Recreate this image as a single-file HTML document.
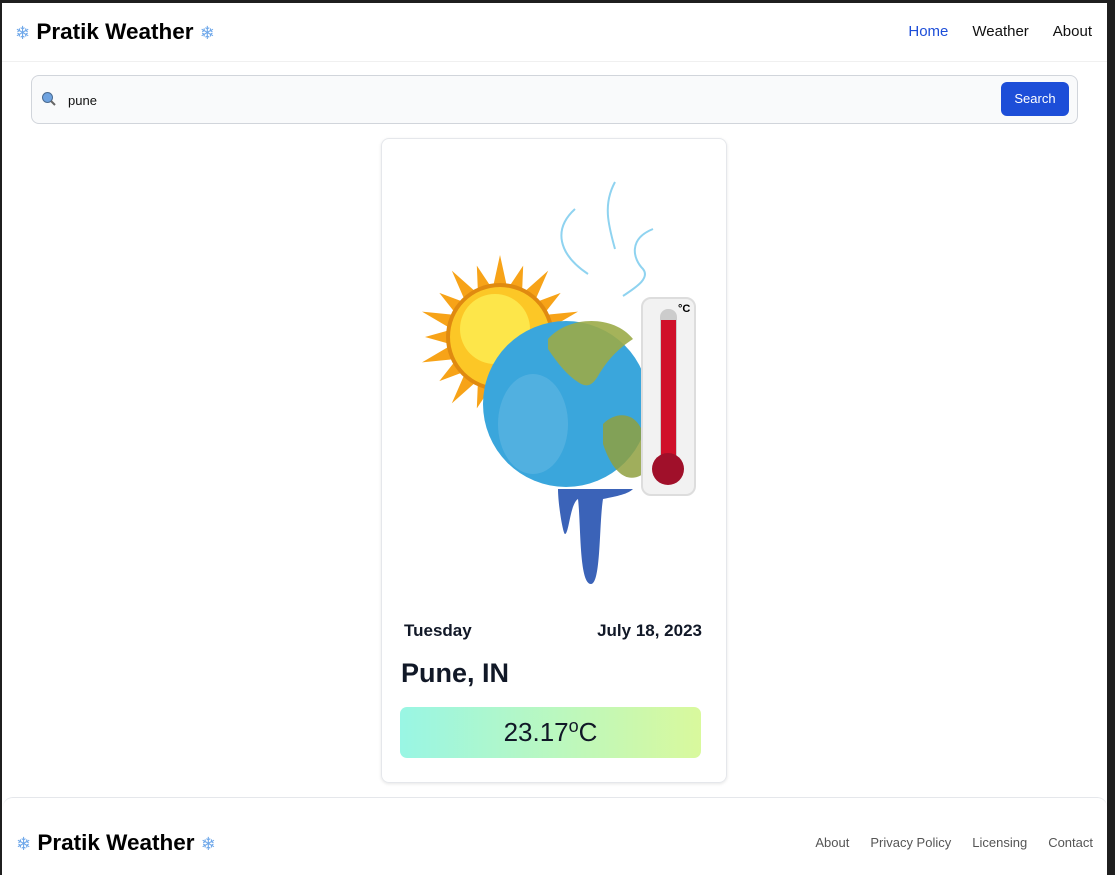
<!DOCTYPE html>
<html><head><meta charset="utf-8"><style>
*{box-sizing:border-box;margin:0;padding:0}
html,body{width:1115px;height:875px;overflow:hidden;background:#1f1f1f}
body{font-family:"Liberation Sans","DejaVu Sans",sans-serif;position:relative}
.page{position:absolute;left:2px;top:3px;width:1105px;height:872px;background:#fff}
.nav{height:59px;border-bottom:1px solid #f0f0f0;position:relative}
.logo{position:absolute;left:13px;top:16px;font-size:22.5px;font-weight:bold;color:#000}
.sn{color:#6fa8ea;font-size:18px}
.links{position:absolute;right:15px;top:20px;font-size:15px;color:#111}
.links span{margin-left:24px}
.search{position:absolute;left:29px;top:72px;width:1047px;height:49px;border:1px solid #d1d5db;border-radius:8px;background:#f9fafb}
.search .q{position:absolute;left:36px;top:17px;font-size:13px;color:#111}
.btn{position:absolute;right:8px;top:6px;width:68px;height:34px;background:#1d4ed8;color:#fff;border-radius:6px;font-size:13px;text-align:center;line-height:34px}
.card{position:absolute;left:379px;top:135px;width:346px;height:645px;border:1px solid #e5e7eb;border-radius:8px;box-shadow:0 1px 3px rgba(0,0,0,.1)}
.day{position:absolute;left:22px;top:482px;font-size:17px;font-weight:bold;color:#111827}
.date{position:absolute;right:24px;top:482px;font-size:17px;font-weight:bold;color:#111827}
.city{position:absolute;left:19px;top:519px;font-size:27px;font-weight:bold;color:#111827}
.temp{position:absolute;left:18px;top:568px;width:301px;height:51px;border-radius:7px;background:linear-gradient(90deg,#99f6e4,#d9f99d);text-align:center;font-size:26px;line-height:51px;color:#111827}
.temp .o{font-size:18px;position:relative;top:-9px}
.foot{position:absolute;left:1px;top:794px;width:1104px;height:90px;border-top:1px solid #e5e7eb;border-radius:10px 10px 0 0}
.foot .logo{top:32px;left:13px}
.flinks{position:absolute;right:14px;top:37px;font-size:13px;color:#555}
.flinks span{margin-left:21px}
</style></head><body><div class="page">
<div class="nav"><div class="logo"><span class="sn">❄</span> Pratik Weather <span class="sn">❄</span></div>
<div class="links"><span style="color:#1d4ed8">Home</span><span>Weather</span><span>About</span></div></div>
<div class="search">
<svg style="position:absolute;left:9px;top:15px" width="16" height="16" viewBox="0 0 16 16"><circle cx="6.5" cy="6.5" r="5" fill="#6fa3e0" stroke="#4a6a90" stroke-width="1"/><line x1="10" y1="10" x2="14" y2="14" stroke="#666" stroke-width="2"/></svg>
<div class="q">pune</div><div class="btn">Search</div></div>
<div class="card">
<svg style="position:absolute;left:0;top:0" width="346" height="460" viewBox="379 135 346 460">
<g fill="none" stroke="#8fd3f0" stroke-width="2"><path d="M572 205 C550 225,555 250,585 270"/><path d="M612 178 C600 200,605 220,612 245"/><path d="M650 225 C625 235,630 255,640 265 C648 275,630 285,620 292"/></g>
<g transform="translate(497,333)" fill="#f7a318">
<polygon points="-7,-50 0,-82 7,-50"/><polygon transform="rotate(18)" points="-7,-50 0,-75 7,-50"/><polygon transform="rotate(36)" points="-7,-50 0,-82 7,-50"/><polygon transform="rotate(54)" points="-7,-50 0,-75 7,-50"/><polygon transform="rotate(72)" points="-7,-50 0,-82 7,-50"/><polygon transform="rotate(90)" points="-7,-50 0,-75 7,-50"/><polygon transform="rotate(108)" points="-7,-50 0,-82 7,-50"/><polygon transform="rotate(126)" points="-7,-50 0,-75 7,-50"/><polygon transform="rotate(144)" points="-7,-50 0,-82 7,-50"/><polygon transform="rotate(162)" points="-7,-50 0,-75 7,-50"/><polygon transform="rotate(180)" points="-7,-50 0,-82 7,-50"/><polygon transform="rotate(198)" points="-7,-50 0,-75 7,-50"/><polygon transform="rotate(216)" points="-7,-50 0,-82 7,-50"/><polygon transform="rotate(234)" points="-7,-50 0,-75 7,-50"/><polygon transform="rotate(252)" points="-7,-50 0,-82 7,-50"/><polygon transform="rotate(270)" points="-7,-50 0,-75 7,-50"/><polygon transform="rotate(288)" points="-7,-50 0,-82 7,-50"/><polygon transform="rotate(306)" points="-7,-50 0,-75 7,-50"/><polygon transform="rotate(324)" points="-7,-50 0,-82 7,-50"/><polygon transform="rotate(342)" points="-7,-50 0,-75 7,-50"/>
<circle r="54" fill="#e08a10"/><circle r="50" fill="#fcc726"/><circle cx="-5" cy="-8" r="35" fill="#fde64a"/></g>
<path d="M555 485 C555 500,560 530,562 530 C566 530,567 500,575 495 C578 520,576 580,588 580 C598 580,596 520,600 495 C615 492,625 490,630 485 Z" fill="#3b63b8"/>
<circle cx="563" cy="400" r="83" fill="#3aa6dc"/>
<path d="M545 335 C565 312,610 310,630 335 C615 345,605 355,595 372 C590 380,585 385,575 378 C565 372,555 360,545 345 Z" fill="#9bab48" opacity=".9"/>
<path d="M600 420 C615 405,635 410,640 430 L640 470 C625 480,610 470,600 440 Z" fill="#8fa040" opacity=".85"/>
<ellipse cx="530" cy="420" rx="35" ry="50" fill="#fff" opacity=".12"/>
<rect x="639" y="294" width="53" height="197" rx="9" fill="#f2f2f2" stroke="#ddd" stroke-width="2"/>
<rect x="657" y="305" width="17" height="160" rx="8" fill="#ccc"/>
<rect x="658" y="316" width="15" height="148" fill="#d0102a"/>
<circle cx="665" cy="465" r="16" fill="#a0102a"/>
<text x="675" y="308" font-size="11" font-weight="bold" font-family="Liberation Sans">°C</text>
</svg>
<div class="day">Tuesday</div><div class="date">July 18, 2023</div>
<div class="city">Pune, IN</div>
<div class="temp">23.17<span class="o">o</span>C</div>
</div>
<div class="foot"><div class="logo"><span class="sn">❄</span> Pratik Weather <span class="sn">❄</span></div>
<div class="flinks"><span>About</span><span>Privacy Policy</span><span>Licensing</span><span>Contact</span></div></div>
</div></body></html>
